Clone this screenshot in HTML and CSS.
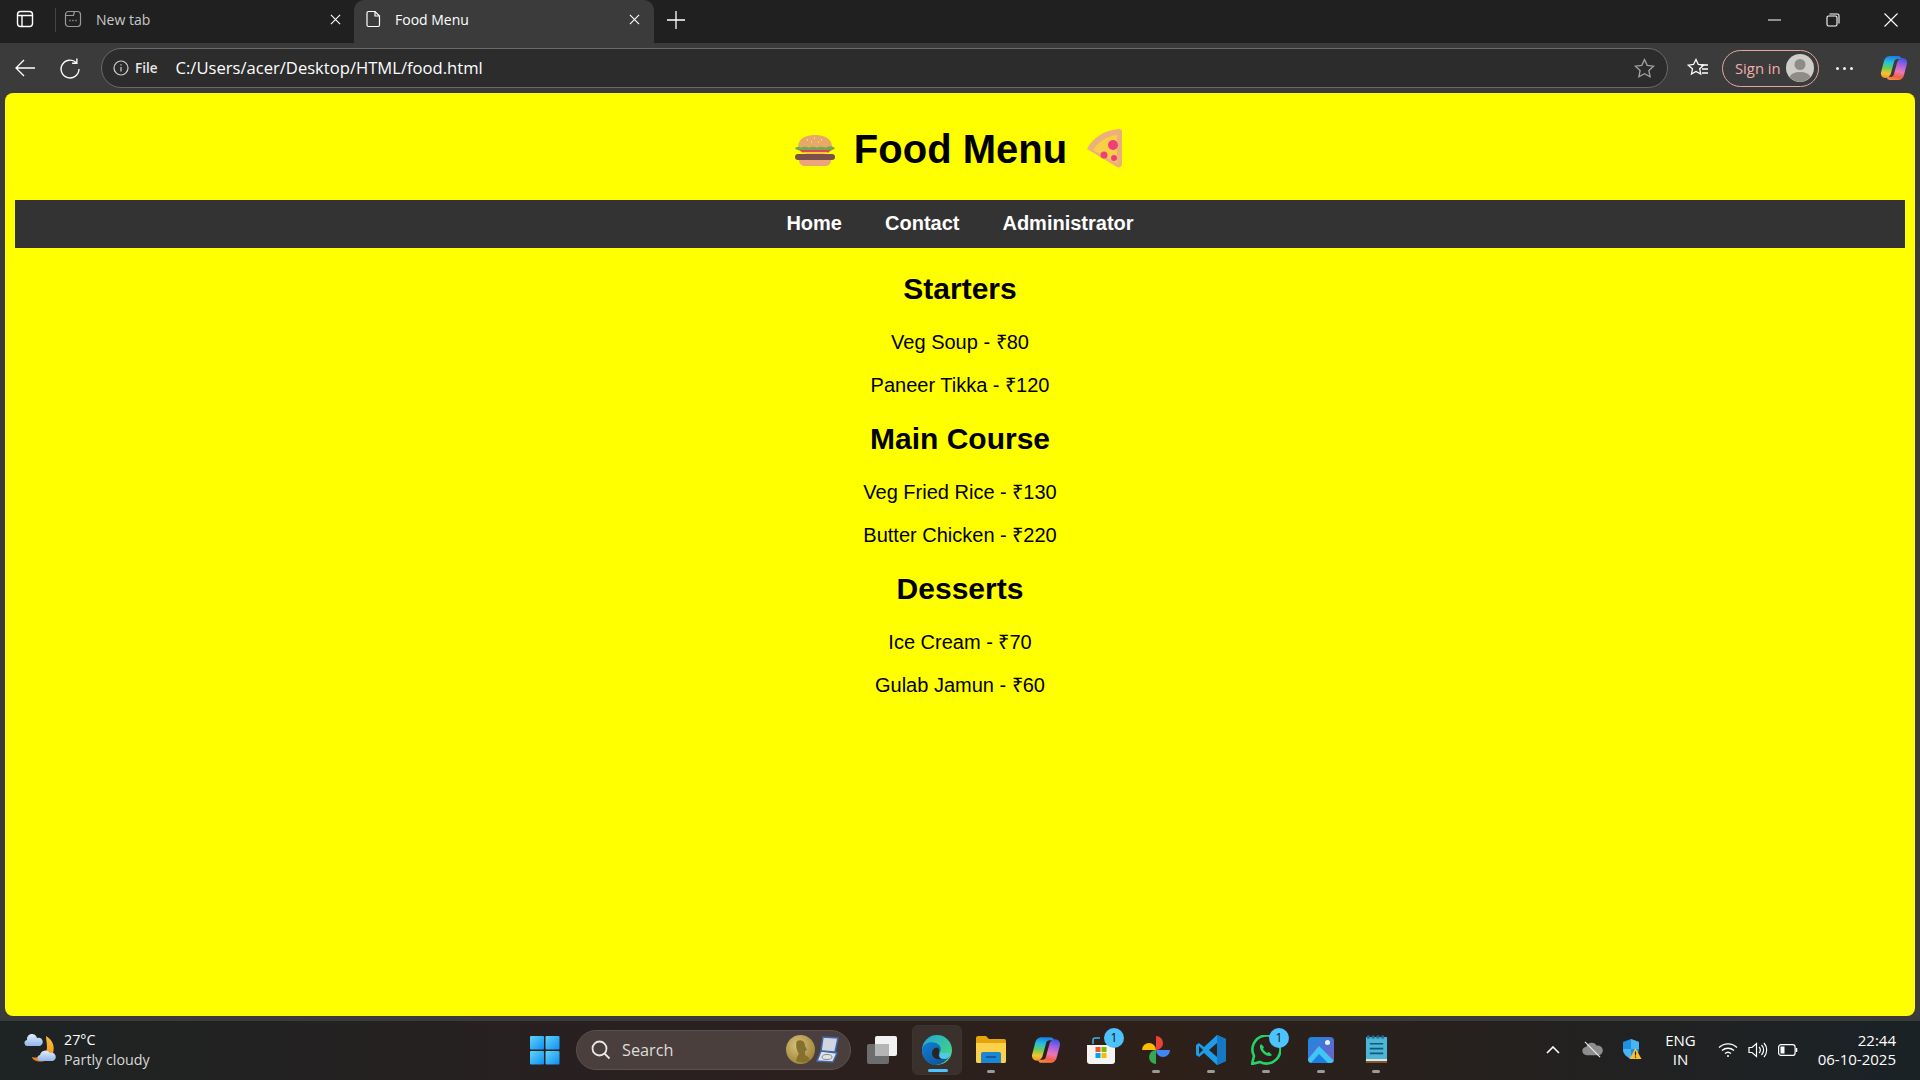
FILE: index.html
```html
<!DOCTYPE html>
<html lang="en">

<head>
    <meta charset="UTF-8">
    <meta name="viewport" content="width=device-width, initial-scale=1.0">
    <title>Food Menu</title>
    <link rel="stylesheet" href="styles.css">
</head>

<body>
    <div class="window">
        <!-- tab strip -->
        <div class="tab-strip">
            <div class="tab-side">
                <svg class="icon-18" viewBox="0 0 18 18" fill="none" stroke="#fff" stroke-width="1.4"><rect x="1.5" y="1.5" width="15" height="15" rx="3"/><path d="M1.5 5.5h15M6 5.5v11"/></svg>
            </div>
            <div class="tab-divider"></div>
            <div class="tab">
                <svg class="icon-18" viewBox="0 0 18 18" fill="none" stroke="#9a9a9a" stroke-width="1.2"><rect x="1.5" y="1.5" width="15" height="15" rx="3"/><path d="M1.5 5.5h8l1-4"/><path d="M5.5 10.5h1M8.5 10.5h1M11.5 10.5h1" stroke="#bbb" stroke-width="1.4"/></svg>
                <span class="tab-title">New tab</span>
                <svg class="tab-close" viewBox="0 0 12 12" stroke="#fff" stroke-width="1.2"><path d="M1 1l10 10M11 1L1 11"/></svg>
            </div>
            <div class="tab tab-active">
                <svg class="icon-18" viewBox="0 0 18 18" fill="none" stroke="#fff" stroke-width="1.2"><path d="M3.5 1.5h6.5l4.5 4.5v9a1.5 1.5 0 0 1-1.500 1.500h-9.500a1.500 1.500 0 0 1-1.500-1.500v-12a1.500 1.500 0 0 1 1.500-1.500z"/><path d="M10 1.500v4.500h4.500"/></svg>
                <span class="tab-title">Food Menu</span>
                <svg class="tab-close" viewBox="0 0 12 12" stroke="#fff" stroke-width="1.2"><path d="M1 1l10 10M11 1L1 11"/></svg>
            </div>
            <svg class="new-tab" viewBox="0 0 18 18" stroke="#fff" stroke-width="1.3"><path d="M9 0v18M0 9h18"/></svg>
            <div class="window-controls">
                <svg class="icon-14" viewBox="0 0 14 14" stroke="#fff" stroke-width="1"><path d="M0 7h13"/></svg>
                <svg class="icon-14" viewBox="0 0 14 14" fill="none" stroke="#fff" stroke-width="1.100"><rect x="1" y="3" width="10" height="10" rx="1.500"/><path d="M3.500 1h8a1.500 1.500 0 0 1 1.500 1.500v8"/></svg>
                <svg class="icon-14" viewBox="0 0 14 14" stroke="#fff" stroke-width="1.100"><path d="M.5.500l13 13M13.500.500l-13 13"/></svg>
            </div>
        </div>

        <!-- address bar row -->
        <div class="toolbar">
            <svg class="nav-back" viewBox="0 0 20 18" fill="none" stroke="#fff" stroke-width="1.300"><path d="M20 9H1M9 1L1 9l8 8"/></svg>
            <svg class="nav-reload" viewBox="0 0 20 20" fill="none" stroke="#fff" stroke-width="1.300"><path d="M16.500 4.500a8.500 8.500 0 1 0 2.500 6"/><path d="M17 .5v4.500h-4.500"/></svg>
            <div class="address-bar">
                <svg class="icon-16" viewBox="0 0 16 16" fill="none" stroke="#d0d0d0" stroke-width="1.200"><circle cx="8" cy="8" r="7"/><path d="M8 7v4.500M8 4.200v1.300"/></svg>
                <span class="file-label">File</span>
                <span class="url">C:/Users/acer/Desktop/HTML/food.html</span>
                <svg class="star" viewBox="0 0 20 20" fill="none" stroke="#a0a0a0" stroke-width="1.300"><path d="M10 1.500l2.600 5.500 6 .8-4.400 4.100 1.100 6-5.300-2.900-5.300 2.900 1.100-6-4.400-4.100 6-.8z"/></svg>
            </div>
            <svg class="favorites" viewBox="0 0 22 20" fill="none" stroke="#fff" stroke-width="1.300"><path d="M9 1.500l2.300 5 5.200.7-3.800 3.600 1 5.200-4.700-2.600-4.500 2.600 1-5.200L1.200 7.200l5.300-.7z"/><path d="M14 7h7M15 11h6M15 15h6"/></svg>
            <div class="sign-in">
                <span>Sign in</span>
                <svg class="avatar" viewBox="0 0 28 28"><circle cx="14" cy="14" r="14" fill="#cfcdc9"/><circle cx="14" cy="10.500" r="5.500" fill="#8f8b86"/><path d="M3.500 23a11 7 0 0 1 21 0 14 14 0 0 1-21 0z" fill="#8f8b86"/></svg>
            </div>
            <div class="more-dots"><i></i><i></i><i></i></div>
            <svg class="copilot" viewBox="0 0 28 28">
                <defs>
                    <linearGradient id="copilot-a" x1=".5" y1="0" x2=".4" y2="1"><stop offset="0" stop-color="#1a7ce8"/><stop offset=".3" stop-color="#22c4d8"/><stop offset=".55" stop-color="#6ccc5a"/><stop offset=".8" stop-color="#f0c52e"/><stop offset="1" stop-color="#f59a2e"/></linearGradient>
                    <linearGradient id="copilot-b" x1=".6" y1="0" x2=".4" y2="1"><stop offset="0" stop-color="#4058e8"/><stop offset=".3" stop-color="#a860e0"/><stop offset=".6" stop-color="#e878b8"/><stop offset=".85" stop-color="#f4603f"/><stop offset="1" stop-color="#f58a3f"/></linearGradient>
                </defs>
                <path d="M10 2h8c2 0 3 1 3.500 3h-4c-2 0-3 1-3.500 3l-3 11c-.6 3-3 5-5.500 5C2 24 .5 21 1 18.500L4 7c.6-3 3-5 6-5z" fill="url(#copilot-a)"/>
                <path d="M18 26h-8c-2 0-3-1-3.500-3h4c2 0 3-1 3.500-3l3-11c.6-3 3-5 5.500-5C25.900 4 27.500 7 27 9.500L24 21c-.6 3-3 5-6 5z" fill="url(#copilot-b)"/>
            </svg>
        </div>

        <!-- the page itself -->
        <main class="page">
            <h1 class="page-title">
                <svg class="emoji-burger" viewBox="0 0 40 33">
                    <path d="M3 13C3 5 10 1 20 1s17 4 17 12z" fill="#e8a868"/>
                    <path d="M12 6h1M19 4h1M26 6h1M16 8h1M23 8h1" stroke="#fff4e0" stroke-width="1.200"/>
                    <path d="M0 14c3-2 5 0 8-1s5 1 8 0 5 1 8 0 5 1 8 0 5-1 8 1c-2 3-5 2-8 3H8c-3-1-6 0-8-3z" fill="#72a850"/>
                    <path d="M4 16h32l-3 3H8z" fill="#e0455a"/>
                    <path d="M6 18h28l-7 3H14z" fill="#f6c53a"/>
                    <rect x="0" y="20" width="40" height="6" rx="3" fill="#7b5048"/>
                    <path d="M4 26h32c0 4-3 6-6 6H10c-3 0-6-2-6-6z" fill="#eda478"/>
                </svg>
                <span>Food Menu</span>
                <svg class="emoji-pizza" viewBox="0 0 36 40">
                    <path d="M1 21C6 10 19 2 33 1c2 0 3 1 3 3v32c0 3-3 4-5 3z" fill="#ebb07c"/>
                    <path d="M7 22C12 14 21 8 31 7v28z" fill="#fbcf45"/>
                    <circle cx="27" cy="17" r="5" fill="#ef3f78"/>
                    <circle cx="18" cy="27" r="3.500" fill="#ef3f78"/>
                    <circle cx="28" cy="30" r="3" fill="#ef3f78"/>
                </svg>
            </h1>

            <nav class="main-nav">
                <a href="#">Home</a>
                <a href="#">Contact</a>
                <a href="#">Administrator</a>
            </nav>

            <section class="menu-section">
                <h2>Starters</h2>
                <p>Veg Soup - ₹80</p>
                <p>Paneer Tikka - ₹120</p>
            </section>
            <section class="menu-section">
                <h2>Main Course</h2>
                <p>Veg Fried Rice - ₹130</p>
                <p>Butter Chicken - ₹220</p>
            </section>
            <section class="menu-section">
                <h2>Desserts</h2>
                <p>Ice Cream - ₹70</p>
                <p>Gulab Jamun - ₹60</p>
            </section>
        </main>

        <!-- windows taskbar -->
        <footer class="taskbar">
            <div class="weather">
                <svg class="weather-icon" viewBox="0 0 34 34">
                    <defs>
                        <linearGradient id="moon-grad" x1=".8" y1="0" x2=".3" y2="1"><stop offset="0" stop-color="#f8c23a"/><stop offset="1" stop-color="#ee7d12"/></linearGradient>
                        <linearGradient id="cloud-grad" x1="0" y1="0" x2="0" y2="1"><stop offset="0" stop-color="#e4eefc"/><stop offset="1" stop-color="#8fb6ea"/></linearGradient>
                    </defs>
                    <path d="M22 3C29 7 31 14 29 20c-3 7-11 11-19 7-1-1-2-2-2-3 8 2 14-2 15-9 0-5-1-9-1-12z" fill="url(#moon-grad)"/>
                    <path d="M4 13a3 3 0 0 1-1-6 5 5 0 0 1 10-2 4 4 0 0 1 3 8z" fill="url(#cloud-grad)"/>
                    <path d="M17 28a3 3 0 0 1-1-6 5.500 5.500 0 0 1 10-2 4 4 0 0 1 3 8z" fill="url(#cloud-grad)"/>
                </svg>
                <div class="weather-text">
                    <span class="weather-temp">27°C</span>
                    <span class="weather-desc">Partly cloudy</span>
                </div>
            </div>

            <div class="taskbar-center">
                <svg class="start-icon" viewBox="0 0 30 30">
                    <defs><linearGradient id="start-grad" x1="0" y1="0" x2="1" y2="1"><stop offset="0" stop-color="#5fd4fb"/><stop offset="1" stop-color="#0f8ff0"/></linearGradient></defs>
                    <rect x="0" y="1" width="14" height="13.500" rx="1" fill="url(#start-grad)"/>
                    <rect x="15.500" y="1" width="14" height="13.500" rx="1" fill="url(#start-grad)"/>
                    <rect x="0" y="16" width="14" height="13.500" rx="1" fill="url(#start-grad)"/>
                    <rect x="15.500" y="16" width="14" height="13.500" rx="1" fill="url(#start-grad)"/>
                </svg>
                <div class="search-box">
                    <svg class="search-icon" viewBox="0 0 20 20" fill="none" stroke="#e8e8e8" stroke-width="1.800"><circle cx="8.500" cy="8.500" r="7"/><path d="M13.500 13.500l5 5"/></svg>
                    <span class="search-text">Search</span>
                    <svg class="search-medal" viewBox="0 0 54 32">
                        <defs><radialGradient id="medal-grad" cx=".4" cy=".35" r=".7"><stop offset="0" stop-color="#d8c27a"/><stop offset="1" stop-color="#9c8238"/></radialGradient></defs>
                        <circle cx="14.500" cy="15.500" r="14.500" fill="url(#medal-grad)"/>
                        <path d="M11 7c4-2 8 0 8 5l2 4-2 1 0 4c3 1 4 3 5 5-3 3-10 3-14 1 1-3 1-5 3-7-2-3-4-9-2-13z" fill="#86702e"/>
                        <path d="M37 3l15 1-3 14-14-1z" fill="#cfd6e0" stroke="#3f66a8" stroke-width="1.500"/>
                        <path d="M31 27l4-10 16 2-4 9z" fill="#dfe4ea" stroke="#3f66a8" stroke-width="1.500"/>
                        <ellipse cx="41" cy="23" rx="5" ry="2.500" fill="none" stroke="#8a8a80" stroke-width="1"/>
                    </svg>
                </div>

                <div class="task-app">
                    <svg class="app-icon" viewBox="0 0 30 30"><rect x="8" y="1" width="22" height="20" rx="2" fill="#f2f2f2"/><rect x="0" y="9" width="22" height="20" rx="2" fill="#6d6d6d"/><rect x="8" y="9" width="14" height="12" fill="#b5b5b5"/></svg>
                </div>
                <div class="task-app task-app-active">
                    <svg class="app-icon" viewBox="0 0 30 30">
                        <defs>
                            <linearGradient id="edge-a" x1="0" y1="0" x2="1" y2="1"><stop offset="0" stop-color="#1fa5dc"/><stop offset=".7" stop-color="#3fce8e"/><stop offset="1" stop-color="#7ed957"/></linearGradient>
                            <linearGradient id="edge-b" x1="0" y1="0" x2="1" y2="1"><stop offset="0" stop-color="#0f7fd6"/><stop offset="1" stop-color="#114a8c"/></linearGradient>
                        </defs>
                        <circle cx="15" cy="15" r="15" fill="url(#edge-a)"/>
                        <path d="M0 15C1 8 8 6 14 8c5 2 6 7 3 10h12c-3 8-10 12-16 12C6 30 0 23 0 15z" fill="url(#edge-b)"/>
                        <path d="M29 18H18c-2 3 0 6 4 6 3 0 6-2 7-6z" fill="#4fc9e8"/>
                        <path d="M13 13c3-1 5 1 4 5-1 3 0 5 2 6-5 1-9-2-9-6 0-2 1-4 3-5z" fill="#2b2320"/>
                    </svg>
                    <i class="app-active-bar"></i>
                </div>
                <div class="task-app">
                    <svg class="app-icon" viewBox="0 0 30 30"><path d="M0 3a2 2 0 0 1 2-2h8l3 3h15a2 2 0 0 1 2 2v20a2 2 0 0 1-2 2H2a2 2 0 0 1-2-2z" fill="#e5a30c"/><path d="M0 8h30v18a2 2 0 0 1-2 2H2a2 2 0 0 1-2-2z" fill="#fbd14b"/><path d="M5 19a2 2 0 0 1 2-2h16a2 2 0 0 1 2 2v9H5z" fill="#1b86d4"/><path d="M10 22h10" stroke="#0c4f8c" stroke-width="1.500"/></svg>
                    <i class="app-dot"></i>
                </div>
                <div class="task-app">
                    <svg class="app-icon" viewBox="0 0 28 28">
                        <path d="M10 2h8c2 0 3 1 3.500 3h-4c-2 0-3 1-3.500 3l-3 11c-.6 3-3 5-5.500 5C2 24 .5 21 1 18.500L4 7c.6-3 3-5 6-5z" fill="url(#copilot-a)"/>
                        <path d="M18 26h-8c-2 0-3-1-3.500-3h4c2 0 3-1 3.500-3l3-11c.6-3 3-5 5.500-5C25.900 4 27.500 7 27 9.500L24 21c-.6 3-3 5-6 5z" fill="url(#copilot-b)"/>
                    </svg>
                </div>
                <div class="task-app">
                    <svg class="app-icon" viewBox="0 0 30 30"><path d="M7 9V5a2 2 0 0 1 2-2h5" fill="none" stroke="#38b6f2" stroke-width="1.500"/><path d="M1 10h28v16a3 3 0 0 1-3 3H4a3 3 0 0 1-3-3z" fill="#f4f4f4"/><rect x="9.500" y="12" width="5" height="5" fill="#f2512d"/><rect x="15.500" y="12" width="5" height="5" fill="#7cb900"/><rect x="9.500" y="18" width="5" height="5" fill="#01a4ef"/><rect x="15.500" y="18" width="5" height="5" fill="#ffb902"/></svg>
                    <span class="app-badge">1</span>
                </div>
                <div class="task-app">
                    <svg class="app-icon" viewBox="0 0 30 30"><path d="M15 15V1a7 7 0 0 1 7 7 7 7 0 0 1-7 7z" fill="#ea4335"/><path d="M15 15H29a7 7 0 0 1-7 7 7 7 0 0 1-7-7z" fill="#4285f4"/><path d="M15 15v14a7 7 0 0 1-7-7 7 7 0 0 1 7-7z" fill="#34a853"/><path d="M15 15H1a7 7 0 0 1 7-7 7 7 0 0 1 7 7z" fill="#fbbc04"/></svg>
                    <i class="app-dot"></i>
                </div>
                <div class="task-app">
                    <svg class="app-icon" viewBox="0 0 30 30"><path d="M21 0l9 4v22l-9 4L8 18l-5 4-3-2v-10l3-2 5 4z" fill="#1e9ce8"/><path d="M21 0l9 4v22l-9 4z" fill="#1578c4"/><path d="M21 8l-8 7 8 7z" fill="#2b2320"/><path d="M3 11l4 4-4 4z" fill="#2b2320"/></svg>
                    <i class="app-dot"></i>
                </div>
                <div class="task-app">
                    <svg class="app-icon" viewBox="0 0 30 30"><path d="M1 29l2-8A14 14 0 1 1 9 27z" fill="none" stroke="#25d366" stroke-width="2.600"/><path d="M10 9c-2 2-1 6 2 9s7 4 9 2l-3-3-2 1c-2-1-3-3-4-4l1-2z" fill="#25d366"/></svg>
                    <span class="app-badge">1</span>
                    <i class="app-dot"></i>
                </div>
                <div class="task-app">
                    <svg class="app-icon-photos" viewBox="0 0 26 26"><defs><linearGradient id="photos-grad" x1="0" y1="0" x2="1" y2="1"><stop offset="0" stop-color="#1a8ae0"/><stop offset="1" stop-color="#7d5bc8"/></linearGradient><clipPath id="photos-clip"><rect width="26" height="26" rx="4"/></clipPath></defs><g clip-path="url(#photos-clip)"><rect width="26" height="26" fill="url(#photos-grad)"/><circle cx="19.500" cy="5.500" r="2.500" fill="#e8f0ff"/><path d="M0 22L11 9l5 5 10 10v2H0z" fill="#3fc6f2"/><path d="M3 26l8-9 9 9z" fill="#1f7fe0"/></g></svg>
                    <i class="app-dot"></i>
                </div>
                <div class="task-app">
                    <svg class="app-icon-notepad" viewBox="0 0 24 30"><rect x="1" y="2" width="22" height="25" fill="#4db5d6"/><path d="M1 26h22v3H1z" fill="#8a5a34"/><path d="M1 25h22v2H1z" fill="#e8e4da"/><path d="M2 2h20" stroke="#1f6f92" stroke-width="3" stroke-dasharray="3 2"/><path d="M5 9h14M5 14h14M5 19h14" stroke="#12587a" stroke-width="1.800"/></svg>
                    <i class="app-dot"></i>
                </div>
            </div>

            <div class="tray">
                <svg class="tray-chevron" viewBox="0 0 14 8" fill="none" stroke="#fff" stroke-width="1.600"><path d="M1 7l6-6 6 6"/></svg>
                <svg class="tray-cloud" viewBox="0 0 22 18"><path d="M5 15a4.500 4.500 0 0 1-.5-9 6 6 0 0 1 11-1 5 5 0 0 1 2.500 10z" fill="#8e8e8e"/><path d="M3 1l16 16" stroke="#eee" stroke-width="1.200"/></svg>
                <svg class="tray-shield" viewBox="0 0 20 21"><path d="M9 0l8 3v7c0 5-4 8-8 10-4-2-8-5-8-10V3z" fill="#1f8fe0"/><path d="M9 0l8 3v7H9zM9 10v10C5 18 1 15 1 10z" fill="#48b4f2"/><path d="M13.500 9l6 11h-12z" fill="#fbc02d"/><path d="M13.500 12.500v4M13.500 17.500v1.200" stroke="#222" stroke-width="1.200"/></svg>
                <div class="tray-lang"><span>ENG</span><span>IN</span></div>
                <svg class="tray-wifi" viewBox="0 0 20 16" fill="none" stroke="#fff" stroke-width="1.400"><path d="M1 5.500a13 13 0 0 1 18 0M4 8.500a9 9 0 0 1 12 0M7 11.500a4.500 4.500 0 0 1 6 0"/><circle cx="10" cy="14" r="1" fill="#fff" stroke="none"/></svg>
                <svg class="tray-sound" viewBox="0 0 20 16" fill="none" stroke="#fff" stroke-width="1.200"><path d="M1 5.500h3l4.500-4v13L4 10.500H1z"/><path d="M11 5a4 4 0 0 1 0 6M13.500 3a7 7 0 0 1 0 10M16 1a10.500 10.500 0 0 1 0 14"/></svg>
                <svg class="tray-battery" viewBox="0 0 20 12" fill="none" stroke="#fff" stroke-width="1.200"><rect x=".6" y=".6" width="16.500" height="10.800" rx="2.500"/><rect x="2.500" y="2.500" width="4" height="7" fill="#fff" stroke="none"/><path d="M18.500 4v4" stroke-width="1.600"/></svg>
                <div class="tray-clock"><span>22:44</span><span>06-10-2025</span></div>
            </div>
        </footer>
    </div>
</body>

</html>
```

FILE: styles.css
```css
:root {
    --strip-color: #202020;
    --toolbar-color: #3b3b3b;
    --page-color: #ffff00;
}

* {
    box-sizing: border-box;
}

html,
body {
    margin: 0;
    padding: 0;
    height: 100%;
}

body {
    overflow: hidden;
    font-family: "Open Sans", "Noto Sans", sans-serif;
    color: white;
}

svg {
    display: block;
    flex-shrink: 0;
}

.icon-14 {
    width: 14px;
    height: 14px;
}

.icon-16 {
    width: 16px;
    height: 16px;
}

.icon-18 {
    width: 18px;
    height: 18px;
}

.window {
    display: flex;
    flex-direction: column;
    width: 1920px;
    height: 1080px;
    background-color: var(--toolbar-color);
}

/* tab strip */
.tab-strip {
    display: flex;
    align-items: flex-end;
    height: 43px;
    background-color: var(--strip-color);
}

.tab-side {
    display: flex;
    align-items: center;
    align-self: stretch;
    padding: 0 0 6px 16px;
    width: 55px;
}

.tab-divider {
    align-self: center;
    width: 1px;
    height: 24px;
    margin: 0 8px 3px 0;
    background-color: #444;
}

.tab {
    display: flex;
    align-items: center;
    width: 290px;
    height: 39px;
    padding: 0 8px 9px 0;
    font-size: 14px;
    color: #c8c8c8;
}

.tab-title {
    flex: 1;
    margin-left: 14px;
    white-space: nowrap;
}

.tab-close {
    width: 11px;
    height: 11px;
    margin-right: 5px;
}

.tab-active {
    width: 300px;
    height: 43px;
    padding: 0 8px 5px 11px;
    border-radius: 10px 10px 0 0;
    background-color: var(--toolbar-color);
    color: white;
}

.tab-active .tab-title {
    margin-left: 12px;
}

.tab-active .tab-close {
    margin-right: 6px;
}

.new-tab {
    width: 18px;
    height: 18px;
    margin: 0 0 14px 13px;
}

.window-controls {
    display: flex;
    align-items: center;
    gap: 44px;
    margin-left: auto;
    padding: 0 22px 3px 0;
    height: 43px;
}

/* toolbar */
.toolbar {
    display: flex;
    align-items: center;
    height: 50px;
    padding: 0 12px 0 14px;
    background-color: var(--toolbar-color);
}

.nav-back {
    width: 22px;
    height: 18px;
}

.nav-reload {
    width: 21px;
    height: 21px;
    margin-left: 23px;
}

.address-bar {
    display: flex;
    align-items: center;
    width: 1567px;
    height: 40px;
    margin-left: 21px;
    padding: 0 12px 0 11px;
    border: 1px solid #6a6a6a;
    border-radius: 20px;
    background-color: #2c2c2c;
}

.file-label {
    margin-left: 6px;
    font-size: 13.500px;
    font-weight: 600;
    color: #e8e8e8;
}

.url {
    margin: -2px 0 0 18px;
    font-size: 16.600px;
    color: white;
}

.star {
    width: 21px;
    height: 21px;
    margin-left: auto;
}

.favorites {
    width: 22px;
    height: 20px;
    margin-left: 19px;
}

.sign-in {
    display: flex;
    align-items: center;
    justify-content: space-between;
    width: 97px;
    height: 37px;
    margin-left: 13px;
    padding: 0 4px 0 12px;
    border: 1px solid #e5a5a0;
    border-radius: 19px;
    font-size: 14.800px;
    color: #eeb0aa;
}

.avatar {
    width: 28px;
    height: 28px;
}

.more-dots {
    display: flex;
    gap: 4px;
    margin-left: 17px;
}

.more-dots i {
    width: 3px;
    height: 3px;
    border-radius: 50%;
    background-color: #eee;
}

.copilot {
    width: 28px;
    height: 28px;
    margin-left: 27px;
}

/* page */
.page {
    flex: 1;
    margin: 0 5px;
    padding: 0 10px;
    border-radius: 8px;
    background-color: var(--page-color);
    color: black;
    font-family: "Liberation Sans", Arial, sans-serif;
    text-align: center;
}

.page-title {
    display: flex;
    justify-content: center;
    align-items: center;
    gap: 19px;
    height: 53px;
    margin: 27px 0;
    padding: 2px 3px 0 0;
    font-size: 40px;
    line-height: 46px;
}

.page-title span {
    padding-top: 3px;
}

.emoji-burger {
    width: 40px;
    height: 33px;
    margin-top: 6px;
}

.emoji-pizza {
    width: 36px;
    height: 40px;
}

.main-nav {
    display: flex;
    justify-content: center;
    gap: 43px;
    padding: 11px 12px 13px;
    background-color: #333;
}

.main-nav a {
    color: white;
    font-size: 20px;
    font-weight: bold;
    line-height: 24px;
    text-decoration: none;
}

.menu-section h2 {
    margin: 25px 0;
    font-size: 30px;
    line-height: 34px;
}

.menu-section:first-of-type h2 {
    margin-top: 24px;
}

.menu-section p {
    margin: 20px 0;
    font-size: 20px;
    line-height: 23px;
}

/* taskbar */
.taskbar {
    position: relative;
    display: flex;
    align-items: center;
    height: 59px;
    margin-top: 5px;
    padding: 0 24px 2px;
    background: linear-gradient(90deg, #1e2323 0%, #2a2020 35%, #2e2019 60%, #1a2226 100%);
}

.weather {
    display: flex;
    align-items: center;
    gap: 6px;
    width: 506px;
}

.weather-icon {
    width: 34px;
    height: 34px;
}

.weather-text {
    display: flex;
    flex-direction: column;
    font-size: 14.300px;
    line-height: 20px;
}

.weather-desc {
    color: #d8d8d8;
}

.taskbar-center {
    display: flex;
    align-items: center;
}

.start-icon {
    width: 30px;
    height: 30px;
}

.search-box {
    display: flex;
    align-items: center;
    width: 275px;
    height: 40px;
    margin-left: 16px;
    padding: 0 10px 0 14px;
    border: 1px solid #5a5050;
    border-radius: 20px;
    background-color: #4a3f3c;
}

.search-icon {
    width: 20px;
    height: 20px;
}

.search-text {
    margin-left: 11px;
    font-size: 16.300px;
    color: #ddd;
}

.search-medal {
    width: 54px;
    height: 32px;
    margin-left: auto;
}

.task-app {
    position: relative;
    display: flex;
    justify-content: center;
    align-items: center;
    width: 50px;
    height: 50px;
    margin-left: 5px;
    border-radius: 6px;
}

.search-box + .task-app {
    margin-left: 6px;
}

.task-app-active {
    border: 1px solid #3d3431;
    background-color: #3a302c;
}

.task-app-active + .task-app {
    margin-left: 4px;
}

.app-icon {
    width: 30px;
    height: 30px;
}

.app-icon-photos {
    width: 26px;
    height: 26px;
}

.app-icon-notepad {
    width: 23px;
    height: 29px;
}

.app-active-bar {
    position: absolute;
    left: 15px;
    bottom: 2px;
    width: 20px;
    height: 3px;
    border-radius: 2px;
    background-color: #4cc2ff;
}

.app-dot {
    position: absolute;
    left: 21px;
    bottom: 2px;
    width: 8px;
    height: 3px;
    border-radius: 2px;
    background-color: #9a9a9a;
}

.app-badge {
    position: absolute;
    top: 3px;
    right: 2px;
    width: 20px;
    height: 20px;
    border-radius: 50%;
    background-color: #4cc2ff;
    color: #111;
    font-size: 12px;
    line-height: 20px;
    text-align: center;
}

.tray {
    display: flex;
    align-items: center;
    margin-left: auto;
}

.tray-chevron {
    width: 14px;
    height: 8px;
}

.tray-cloud {
    width: 21px;
    height: 17px;
    margin-left: 22px;
}

.tray-shield {
    width: 20px;
    height: 21px;
    margin-left: 19px;
}

.tray-lang {
    display: flex;
    flex-direction: column;
    align-items: center;
    margin-left: 23px;
    font-size: 15px;
    line-height: 19px;
}

.tray-wifi {
    width: 20px;
    height: 16px;
    margin-left: 22px;
}

.tray-sound {
    width: 20px;
    height: 16px;
    margin-left: 10px;
}

.tray-battery {
    width: 20px;
    height: 12px;
    margin-left: 10px;
}

.tray-clock {
    display: flex;
    flex-direction: column;
    align-items: flex-end;
    margin-left: 20px;
    font-size: 15px;
    line-height: 19px;
}
```
